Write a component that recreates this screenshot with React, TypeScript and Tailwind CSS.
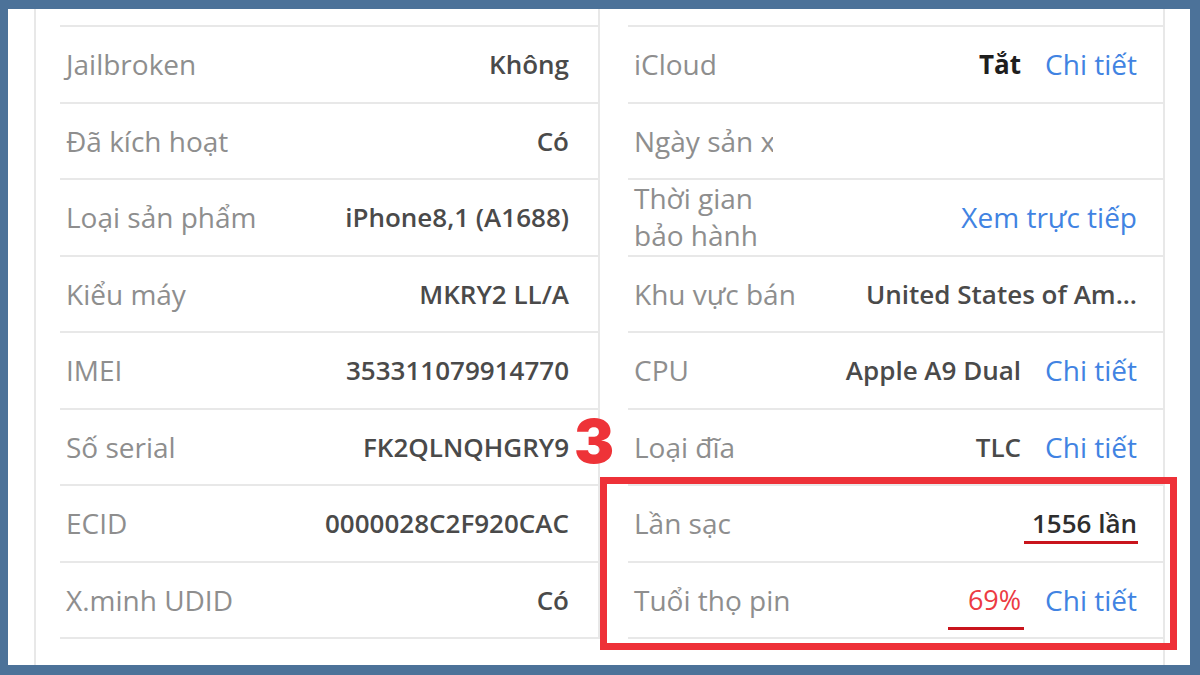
const leftRows = [
  ["Jailbroken", "Không"],
  ["Đã kích hoạt", "Có"],
  ["Loại sản phẩm", "iPhone8,1 (A1688)"],
  ["Kiểu máy", "MKRY2 LL/A"],
  ["IMEI", "353311079914770"],
  ["Số serial", "FK2QLNQHGRY9"],
  ["ECID", "0000028C2F920CAC"],
  ["X.minh UDID", "Có"],
];

function Link({ text = "Chi tiết" }: { text?: string }) {
  return <span className="text-[#4183e2] text-[28px] font-normal">{text}</span>;
}

function RightRow({ label, children }: { label: React.ReactNode; children?: React.ReactNode }) {
  return (
    <div className="h-[76.5px] border-b-2 border-[#e8e8e8] flex items-center justify-between pl-[6px] pr-[26px]">
      <div className="text-[#8e8e8e] text-[28px]">{label}</div>
      <div className="flex items-center gap-[24px] text-[26px] text-[#4a4a4a] font-semibold">{children}</div>
    </div>
  );
}

export default function App() {
  return (
    <div className="w-[1200px] h-[675px] bg-[#4c7299] pt-[9px] pl-[8px] pr-[10px] pb-[10px]">
      <div className="relative h-full bg-white overflow-hidden font-['Open_Sans',sans-serif] leading-[38px]">
        <div className="ml-[26px] w-[1131px] h-full border-l-2 border-r-2 border-[#e8e8e8] flex flex-col">
          <div className="flex shrink-0">
            {/* left column */}
            <div className="w-[562px] pl-[24px] pt-[16px]">
              <div className="border-t-2 border-[#e8e8e8]">
                {leftRows.map(([label, value]) => (
                  <div
                    key={label}
                    className="h-[76.5px] border-b-2 border-[#e8e8e8] flex items-center justify-between pl-[6px] pr-[29px]"
                  >
                    <span className="text-[#8e8e8e] text-[28px]">{label}</span>
                    <span className="text-[#4a4a4a] text-[26px] font-semibold">{value}</span>
                  </div>
                ))}
              </div>
            </div>
            {/* right column */}
            <div className="w-[565px] border-l-2 border-[#e8e8e8] pl-[28px] pt-[16px]">
              <div className="border-t-2 border-[#e8e8e8]">
                <RightRow label="iCloud">
                  <span className="font-bold text-[#1e1e1e]">Tắt</span>
                  <Link />
                </RightRow>
                <RightRow label={<div className="w-[139px] overflow-hidden whitespace-nowrap">Ngày sản xuất</div>} />
                <RightRow label={<div className="w-[140px] leading-[37px]">Thời gian bảo hành</div>}>
                  <Link text="Xem trực tiếp" />
                </RightRow>
                <RightRow label="Khu vực bán">
                  <span>United States of Am...</span>
                </RightRow>
                <RightRow label="CPU">
                  <span>Apple A9 Dual</span>
                  <Link />
                </RightRow>
                <RightRow label="Loại đĩa">
                  <span>TLC</span>
                  <Link />
                </RightRow>
                <RightRow label="Lần sạc">
                  <span className="relative text-[#2e2e2e]">
                    1556 lần
                    <span className="absolute left-[-8px] right-[-1px] top-full -mt-[1px] h-[3px] bg-[#c9141c]" />
                  </span>
                </RightRow>
                <RightRow label="Tuổi thọ pin">
                  <span className="relative text-[#ec3b43] font-normal text-[27px]">
                    69%
                    <span className="absolute left-[-20px] right-[-3px] top-full mt-[8px] h-[3px] bg-[#c9141c]" />
                  </span>
                  <Link />
                </RightRow>
              </div>
            </div>
          </div>
          {/* UDID row, cut off by the frame */}
          <div className="shrink-0 ml-[24px] h-[77px] flex items-center justify-between pl-[6px] pr-[26px]">
            <span className="text-[#8e8e8e] text-[28px]">UDID</span>
            <span className="text-[#4a4a4a] text-[26px] font-semibold">0A63F5D0C8E1B247A9D3E6F0125B8C4D7E9A0F31</span>
          </div>
        </div>

        {/* annotation */}
        <div className="absolute left-[566px] top-[402px] text-[60px] leading-none font-black text-[#ee3338] font-['Inter',sans-serif]">
          3
        </div>
        <div className="absolute left-[592px] top-[468px] w-[577px] h-[173px] border-[7px] border-[#ee3138]" />
      </div>
    </div>
  );
}
